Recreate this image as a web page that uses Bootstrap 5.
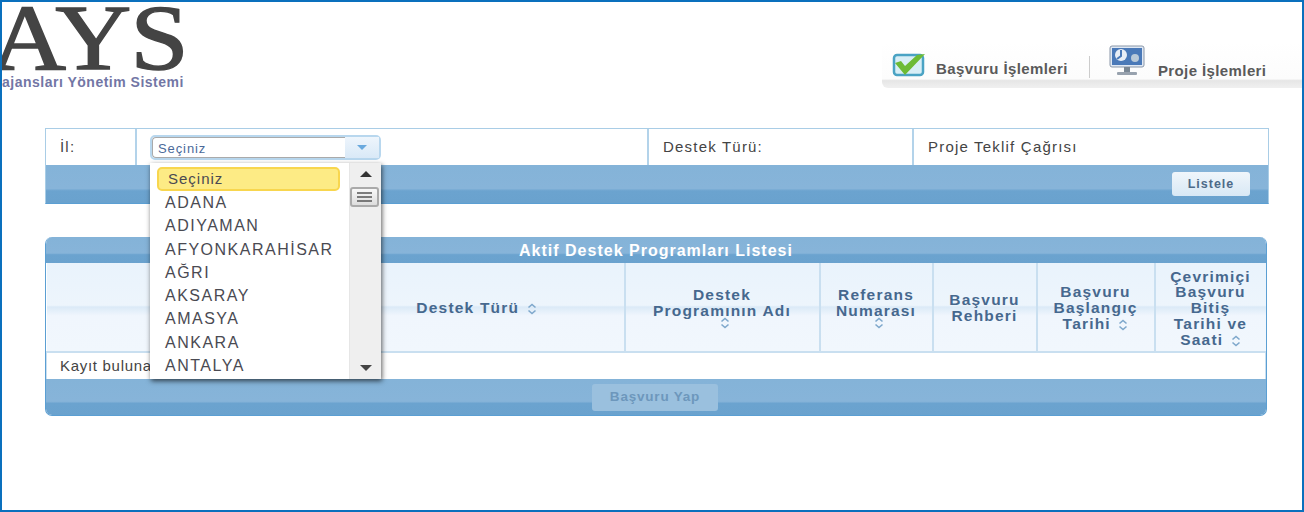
<!DOCTYPE html>
<html lang="tr">
<head>
<meta charset="UTF-8">
<title>AYS</title>
<link href="https://cdn.jsdelivr.net/npm/bootstrap@5.3.0/dist/css/bootstrap.min.css" rel="stylesheet">
<style>
html, body { height: 100%; }
body { background: #fff; font-family: "Liberation Sans", Arial, sans-serif; color: #444; overflow: hidden; }
.frame { height: 512px; border: 2px solid #0a70bd; position: relative; overflow: hidden; padding: 0 33px 0 43px; }
.top-area { height: 126px; margin-left: -43px; margin-right: -33px; }
.logo-box { width: 200px; overflow: hidden; }
.logo-word { font-family: "Liberation Serif", serif; font-size: 94px; line-height: 70px; height: 70px; color: #444; margin-left: -12px; letter-spacing: -1px; white-space: nowrap; -webkit-text-stroke: 1.4px #444; transform: scaleX(1.12); transform-origin: left center; }
.logo-sub { font-size: 14px; font-weight: bold; color: #50558f; line-height: 16px; margin-top: 2px; white-space: nowrap; opacity: .8; letter-spacing: .5px; }
.top-nav { width: 420px; height: 46px; margin-top: 40px; background: linear-gradient(#fff 0, #fcfcfc 80%, #e6e6e6 84%, #f0f0f0 100%); border-radius: 6px 0 0 6px; font-size: 15px; letter-spacing: .4px; font-weight: bold; color: #5a5a5a; padding-left: 10px; }
.nav-sep { width: 1px; height: 22px; background: #ccc; margin: 4px 18px 0 21px; }
.nav-second { margin-left: 12px; }
.panel-form { width: 1224px; border: 1px solid #a9cde6; border-bottom-color: #5b9fd3; font-size: 15px; letter-spacing: 1.2px; }
.form-row-top { height: 36px; background: #fff; }
.fcell { border-right: 2px solid #b3d3ea; padding-left: 14px; }
.fcell:last-child { border-right: 0; }
.fc-a { width: 91px; }
.fc-b { width: 512px; }
.fc-c { width: 265px; }
.fc-d { flex: 1; }
.blue-bar { background: linear-gradient(#84b3d8 0, #87b4d9 62%, #6ba3cf 68%, #6aa2ce 100%); }
.bar-form { height: 38px; }
.pick-box { width: 231px; height: 25px; border: 2px solid #b8d7ee; border-radius: 5px; margin-left: -1px; font-size: 13px; color: #4b6a9a; letter-spacing: .9px; }
.pick-text { flex: 1; border: 1px solid #aaa; border-right: 0; border-radius: 4px 0 0 4px; padding-left: 5px; line-height: 21px; background: #fff; }
.pick-arrow { width: 34px; background: linear-gradient(#eef5fc, #d9e9f7); }
.tri-down { width: 0; height: 0; border: 5px solid transparent; border-top-color: #6aa9de; border-bottom: 0; }
.btn-pale { background: linear-gradient(#f0f6fb, #d8e8f5); border: 0; border-radius: 3px; font-size: 12.5px; letter-spacing: 1px; font-weight: bold; color: #4d6a88; padding: 0; height: 24px; width: 78px; margin-right: 2px; }
.btn-pale:disabled { background: #9ac0de; color: #6d97bc; opacity: 1; width: 126px; height: 27px; font-size: 13.5px; letter-spacing: .8px; margin: 0 2px 0 0; }
.panel-list { width: 1222px; margin-top: 33px; border-radius: 7px; overflow: hidden; border: 1px solid #5b9fd3; border-top: 0; }
.list-head { height: 26px; line-height: 27px; text-align: center; color: #fff; font-weight: bold; font-size: 16px; letter-spacing: 1px; }
.list-table { table-layout: fixed; width: 100%; margin: 0; font-size: 15px; letter-spacing: .7px; }
.cw-1 { width: 282px; }
.cw-2 { width: 296px; }
.cw-3 { width: 195px; }
.cw-4 { width: 113px; }
.cw-5 { width: 104px; }
.cw-6 { width: 118px; }
.list-table > thead > tr > th { height: 89px; padding: 2px 0 0; text-align: center; vertical-align: middle; line-height: 15.7px; font-size: 15.5px; letter-spacing: 1.2px; color: #46688e; font-weight: bold; background: linear-gradient(#e9f3fc 0, #edf5fc 48%, #dbeaf7 50%, #f0f6fd 60%, #f1f7fd 100%); border: 0; border-right: 2px solid #c9dff0; border-bottom: 2px solid #c9dff0; }
.list-table > thead > tr > th:last-child { border-right: 0; }
.list-table > tbody > tr > td { height: 27px; padding: 0 13px; color: #444; border: 0; vertical-align: middle; border-left: 1px solid #c9dff0; border-right: 1px solid #c9dff0; }
.sort-mark { display: inline-block; width: 10px; height: 12px; vertical-align: -2px; margin-left: 2px; }
.sort-line { display: block; margin: -1px 0 0 calc(50% - 2px); }
.bar-list { height: 36px; }
.drop-list { position: absolute; left: 148px; top: 161px; width: 231px; height: 216px; background: #fff; box-shadow: 1px 2px 5px rgba(0,0,0,.65); overflow: hidden; }
.drop-items { flex: 1; padding: 4px 7px 0; font-size: 16px; letter-spacing: 1.5px; color: #4a4a52; }
.drop-item { height: 23.3px; line-height: 23.3px; padding-left: 8px; white-space: nowrap; }
.drop-item.is-on { background: #fdeb85; border: 2px solid #f8d64e; border-radius: 5px; height: 24px; line-height: 20px; padding-left: 9px; width: 183px; font-size: 15px; letter-spacing: 1px; }
.drop-scroll { width: 32px; background: #efefef; border-left: 1px solid #e6e6e6; }
.tri-up-dark { width: 0; height: 0; border: 6px solid transparent; border-bottom-color: #333; border-top: 0; margin-bottom: 10px; }
.tri-down-dark { width: 0; height: 0; border: 6px solid transparent; border-top-color: #444; border-bottom: 0; }
.scroll-thumb { width: 29px; height: 20px; background: linear-gradient(#f8f8f8, #ddd); border: 2px solid #aaa; border-radius: 3px; margin-right: 2px; }
</style>
</head>
<body>
<div class="frame">
  <div class="top-area d-flex justify-content-between">
    <div class="logo-box">
      <div class="logo-word">AYS</div>
      <div class="logo-sub">ajansları Yönetim Sistemi</div>
    </div>
    <div class="top-nav d-flex align-items-center">
      <svg width="36" height="28" viewBox="0 0 36 28" class="me-2"><rect x="2" y="4" width="29" height="20" rx="3" fill="#d8eef6" stroke="#4aa3c4" stroke-width="2.5"/><path d="M3 12 L13 24 L33 3 L25 4 L13 15 L9 10 Z" fill="#6dbb35"/></svg>
      <span class="mt-1 pt-1">Başvuru İşlemleri</span>
      <span class="nav-sep"></span>
      <svg width="38" height="32" viewBox="0 0 38 32" class="mb-2"><rect x="2" y="1" width="34" height="21" rx="2" fill="#dfe8f4" stroke="#8a97a8"/><rect x="4" y="3" width="30" height="17" fill="#4a79b8"/><circle cx="13" cy="10" r="6" fill="#e8eef6"/><path d="M13 5 V11 L9 14" stroke="#4a79b8" stroke-width="2" fill="none"/><circle cx="27" cy="13" r="4" fill="#b9c9d8"/><rect x="16" y="22" width="6" height="5" fill="#7a8794"/><rect x="9" y="27" width="20" height="3" rx="1" fill="#98a2ae"/></svg>
      <span class="nav-second mt-2 pt-1">Proje İşlemleri</span>
    </div>
  </div>

  <div class="panel-form">
    <div class="form-row-top d-flex">
      <div class="fcell fc-a d-flex align-items-center">İl:</div>
      <div class="fcell fc-b d-flex align-items-center">
        <div class="pick-box d-flex">
          <div class="pick-text">Seçiniz</div>
          <div class="pick-arrow d-flex align-items-center justify-content-center"><span class="tri-down"></span></div>
        </div>
      </div>
      <div class="fcell fc-c d-flex align-items-center">Destek Türü:</div>
      <div class="fcell fc-d d-flex align-items-center">Proje Teklif Çağrısı</div>
    </div>
    <div class="blue-bar bar-form d-flex align-items-center justify-content-end pe-3">
      <button type="button" class="btn btn-pale">Listele</button>
    </div>
  </div>

  <div class="panel-list">
    <div class="blue-bar list-head">Aktif Destek Programları Listesi</div>
    <table class="table list-table">
      <colgroup>
        <col class="cw-1"><col class="cw-2"><col class="cw-3"><col class="cw-4"><col class="cw-5"><col class="cw-6"><col>
      </colgroup>
      <thead>
        <tr>
          <th></th>
          <th>Destek Türü <svg class="sort-mark" viewBox="0 0 10 12"><path d="M1.5 4.5 L5 1.5 L8.5 4.5 M1.5 7.5 L5 10.5 L8.5 7.5" fill="none" stroke="#7fa8cc" stroke-width="1.6"/></svg></th>
          <th>Destek<br>Programının Adı<svg class="sort-mark sort-line" viewBox="0 0 10 12"><path d="M1.5 4.5 L5 1.5 L8.5 4.5 M1.5 7.5 L5 10.5 L8.5 7.5" fill="none" stroke="#7fa8cc" stroke-width="1.6"/></svg></th>
          <th>Referans<br>Numarası<svg class="sort-mark sort-line" viewBox="0 0 10 12"><path d="M1.5 4.5 L5 1.5 L8.5 4.5 M1.5 7.5 L5 10.5 L8.5 7.5" fill="none" stroke="#7fa8cc" stroke-width="1.6"/></svg></th>
          <th>Başvuru<br>Rehberi</th>
          <th>Başvuru<br>Başlangıç<br>Tarihi <svg class="sort-mark" viewBox="0 0 10 12"><path d="M1.5 4.5 L5 1.5 L8.5 4.5 M1.5 7.5 L5 10.5 L8.5 7.5" fill="none" stroke="#7fa8cc" stroke-width="1.6"/></svg></th>
          <th>Çevrimiçi<br>Başvuru<br>Bitiş<br>Tarihi ve<br>Saati <svg class="sort-mark" viewBox="0 0 10 12"><path d="M1.5 4.5 L5 1.5 L8.5 4.5 M1.5 7.5 L5 10.5 L8.5 7.5" fill="none" stroke="#7fa8cc" stroke-width="1.6"/></svg></th>
        </tr>
      </thead>
      <tbody>
        <tr><td colspan="7">Kayıt bulunamadı</td></tr>
      </tbody>
    </table>
    <div class="blue-bar bar-list d-flex align-items-center justify-content-center">
      <button type="button" class="btn btn-pale" disabled>Başvuru Yap</button>
    </div>
  </div>

  <div class="drop-list d-flex">
    <div class="drop-items">
      <div class="drop-item is-on">Seçiniz</div>
      <div class="drop-item">ADANA</div>
      <div class="drop-item">ADIYAMAN</div>
      <div class="drop-item">AFYONKARAHİSAR</div>
      <div class="drop-item">AĞRI</div>
      <div class="drop-item">AKSARAY</div>
      <div class="drop-item">AMASYA</div>
      <div class="drop-item">ANKARA</div>
      <div class="drop-item">ANTALYA</div>
    </div>
    <div class="drop-scroll d-flex flex-column align-items-center">
      <span class="tri-up-dark mt-2"></span>
      <div class="scroll-thumb d-flex flex-column align-items-center justify-content-center">
        <svg width="17" height="12" viewBox="0 0 17 12"><path d="M1 2 H16 M1 6 H16 M1 10 H16" stroke="#555" stroke-width="1.5"/></svg>
      </div>
      <span class="tri-down-dark mt-auto mb-2"></span>
    </div>
  </div>
</div>
<script src="https://cdn.jsdelivr.net/npm/bootstrap@5.3.0/dist/js/bootstrap.bundle.min.js"></script>
</body>
</html>
